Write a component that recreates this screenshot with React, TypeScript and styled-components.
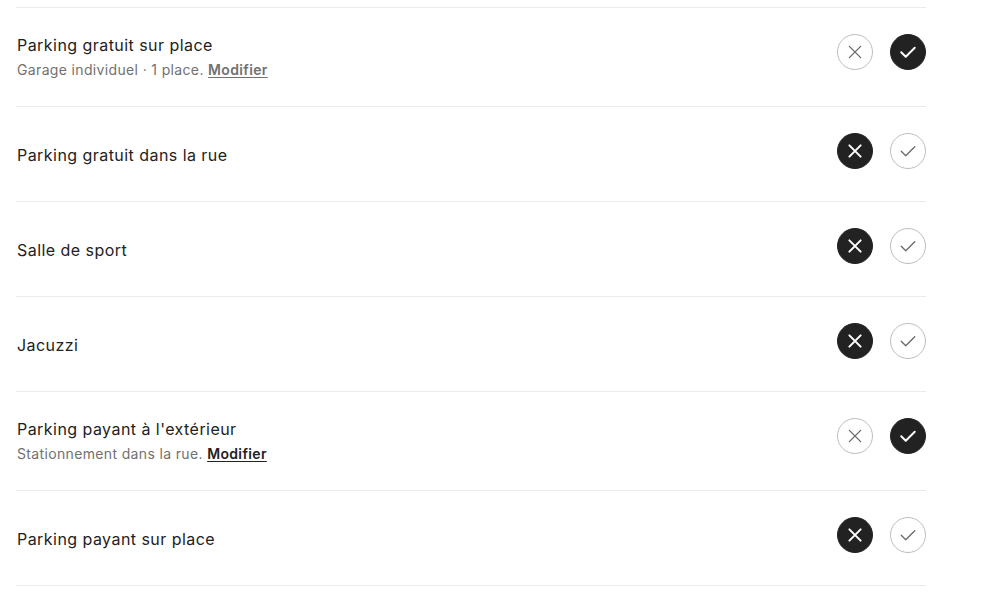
import React from "react";
import styled, { createGlobalStyle } from "styled-components";

const GlobalStyle = createGlobalStyle`
  html, body {
    margin: 0;
    padding: 0;
    background: #ffffff;
  }
  body {
    font-family: Inter, "Noto Sans", "Liberation Sans", sans-serif;
    color: #222222;
    -webkit-font-smoothing: antialiased;
  }
`;

const Page = styled.div`
  padding: 7px 0 0 16px;
  width: 910px;
`;

const List = styled.ul`
  list-style: none;
  margin: 0;
  padding: 0;
  border-bottom: 1px solid #ebebeb;
`;

const Row = styled.li`
  display: flex;
  align-items: center;
  justify-content: space-between;
  gap: 24px;
  min-height: 44px;
  padding: 26px 0 24px;
  border-top: 1px solid #ebebeb;
`;

const TextBlock = styled.div`
  display: flex;
  flex-direction: column;
  min-width: 0;
  padding-left: 1px;
`;

const Title = styled.div`
  font-size: 16px;
  line-height: 22px;
  font-weight: 400;
  letter-spacing: 0.45px;
  color: #222222;
`;

const Subtitle = styled.div`
  margin: 3px 0 2px;
  font-size: 14px;
  line-height: 21px;
  font-weight: 400;
  letter-spacing: 0.35px;
  color: #717171;
`;

const EditLink = styled.a<{ $dark?: boolean }>`
  font-weight: 600;
  color: ${(p) => (p.$dark ? "#222222" : "#717171")};
  text-decoration: underline;
  text-underline-offset: 2px;
  cursor: pointer;
`;

const Actions = styled.div`
  display: flex;
  align-self: flex-start;
  gap: 17px;
  flex-shrink: 0;
`;

const CircleButton = styled.button<{ $selected: boolean }>`
  width: 36px;
  height: 36px;
  border-radius: 50%;
  padding: 0;
  display: flex;
  align-items: center;
  justify-content: center;
  cursor: pointer;
  border: 1px solid ${(p) => (p.$selected ? "#222222" : "#bdbdbd")};
  background: ${(p) => (p.$selected ? "#222222" : "#ffffff")};
  color: ${(p) => (p.$selected ? "#ffffff" : "#6a6a6a")};
`;

const CrossIcon = ({ bold }: { bold: boolean }) => (
  <svg
    viewBox="0 0 32 32"
    width="18"
    height="18"
    fill="none"
    stroke="currentColor"
    strokeWidth={bold ? 3.6 : 2.4}
    strokeLinecap="round"
    aria-hidden="true"
  >
    <path d="m6 6 20 20M26 6 6 26" />
  </svg>
);

const CheckIcon = ({ bold }: { bold: boolean }) => (
  <svg
    viewBox="0 0 32 32"
    width="18"
    height="18"
    fill="none"
    stroke="currentColor"
    strokeWidth={bold ? 3.6 : 2.4}
    strokeLinecap="round"
    strokeLinejoin="round"
    aria-hidden="true"
  >
    <path d="m4 16.5 8 8 16-16" />
  </svg>
);

type Item = {
  title: string;
  subtitle?: string;
  editDark?: boolean;
  available: boolean;
};

const items: Item[] = [
  {
    title: "Parking gratuit sur place",
    subtitle: "Garage individuel · 1 place.",
    editDark: false,
    available: true,
  },
  { title: "Parking gratuit dans la rue", available: false },
  { title: "Salle de sport", available: false },
  { title: "Jacuzzi", available: false },
  {
    title: "Parking payant à l'extérieur",
    subtitle: "Stationnement dans la rue.",
    editDark: true,
    available: true,
  },
  { title: "Parking payant sur place", available: false },
];

export default function App() {
  return (
    <>
      <GlobalStyle />
      <Page>
        <List>
          {items.map((item) => (
            <Row key={item.title}>
              <TextBlock>
                <Title>{item.title}</Title>
                {item.subtitle && (
                  <Subtitle>
                    {item.subtitle} <EditLink $dark={item.editDark}>Modifier</EditLink>
                  </Subtitle>
                )}
              </TextBlock>
              <Actions>
                <CircleButton $selected={!item.available} aria-label="Non">
                  <CrossIcon bold={!item.available} />
                </CircleButton>
                <CircleButton $selected={item.available} aria-label="Oui">
                  <CheckIcon bold={item.available} />
                </CircleButton>
              </Actions>
            </Row>
          ))}
        </List>
      </Page>
    </>
  );
}
